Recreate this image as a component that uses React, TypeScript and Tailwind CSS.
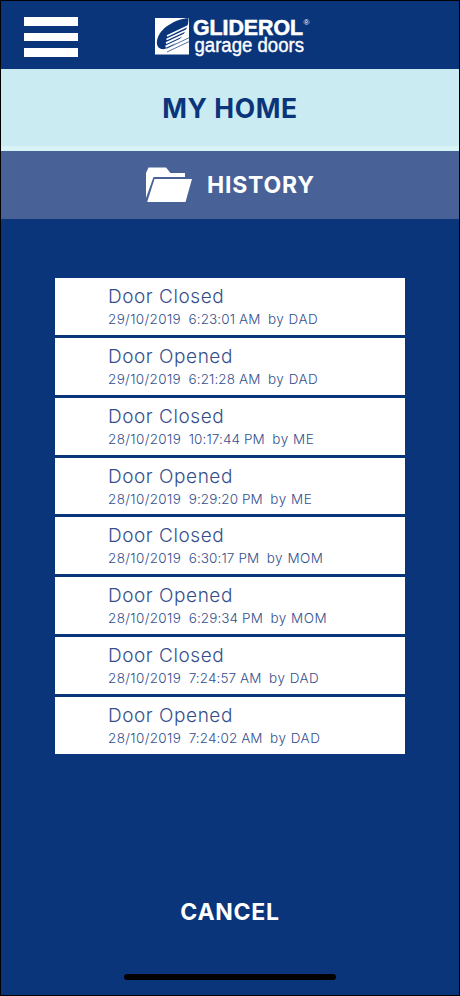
const HISTORY = [
  { event: "Door Closed", date: "29/10/2019", time: "6:23:01 AM", user: "DAD" },
  { event: "Door Opened", date: "29/10/2019", time: "6:21:28 AM", user: "DAD" },
  { event: "Door Closed", date: "28/10/2019", time: "10:17:44 PM", user: "ME" },
  { event: "Door Opened", date: "28/10/2019", time: "9:29:20 PM", user: "ME" },
  { event: "Door Closed", date: "28/10/2019", time: "6:30:17 PM", user: "MOM" },
  { event: "Door Opened", date: "28/10/2019", time: "6:29:34 PM", user: "MOM" },
  { event: "Door Closed", date: "28/10/2019", time: "7:24:57 AM", user: "DAD" },
  { event: "Door Opened", date: "28/10/2019", time: "7:24:02 AM", user: "DAD" },
];

function Logo() {
  return (
    <svg width="160" height="46" viewBox="0 0 160 46" aria-label="Gliderol garage doors">
      <rect x="1" y="2" width="34" height="36.5" fill="#fff" />
      <path d="M34.5 2C22 3 8 11 4 21C1 29 4 34 11 33C22 30 35 16 34.5 2Z" fill="#0a357a" />
      {/* door slats */}
      <g stroke="#fff" fill="none">
        <path d="M13 20L34 10" strokeWidth="1.5" />
        <path d="M12.5 23.6L34.5 13.2" strokeWidth="1.7" />
        <path d="M12 27.2L34.5 16.6" strokeWidth="1.9" />
        <path d="M11.5 30.8L34.5 20" strokeWidth="2.1" />
        <path d="M11.5 34L34.5 23" strokeWidth="2.1" />
      </g>
      <path d="M12.5 32.4L35 21.8M13 36L35 25.6" stroke="#0a357a" strokeWidth="0.7" fill="none" />
      <g fill="#fff" fontFamily="'Liberation Sans', Arial, sans-serif">
        <text x="39" y="19.3" fontSize="22" fontWeight="700" stroke="#fff" strokeWidth="0.6" textLength="110" lengthAdjust="spacingAndGlyphs">
          GLIDEROL
        </text>
        <text x="40.5" y="35.6" fontSize="20" stroke="#fff" strokeWidth="0.4" textLength="109.5" lengthAdjust="spacingAndGlyphs">
          garage doors
        </text>
        <text x="149.5" y="8.5" fontSize="8">®</text>
      </g>
    </svg>
  );
}

function FolderIcon() {
  return (
    <svg width="46" height="36" viewBox="0 0 46 36" fill="#fff" aria-hidden="true">
      <path d="M0 31V6L2.5 0.5H20L24.5 6H39V10H7.5Z" />
      <path d="M8.5 12H46L39.5 35H1.2Z" />
    </svg>
  );
}

export default function App() {
  return (
    <div className="flex h-[996px] w-[460px] flex-col border border-black bg-[#0a357a] font-[Inter,sans-serif]">
      <header className="flex h-[68.4px] shrink-0 items-start">
        <button className="mt-4 ml-[23px] flex w-[54px] flex-col gap-[7px]" aria-label="Menu">
          <span className="h-[8.5px] w-full bg-white" />
          <span className="h-[8.5px] w-full bg-white" />
          <span className="h-[8.5px] w-full bg-white" />
        </button>
        <div className="mt-[15px] ml-[76px]">
          <Logo />
        </div>
      </header>

      <div className="flex h-[81.6px] shrink-0 justify-center border-b-[5px] border-[#d8f3f6] bg-[#caebf2] pt-[18.5px]">
        <h1 className="text-[26.5px] leading-10 font-bold tracking-[0.6px] text-[#0a357a]">MY HOME</h1>
      </div>

      <div className="flex h-[68.5px] shrink-0 items-center bg-[#486197] pl-[145px]">
        <FolderIcon />
        <h2 className="ml-[15px] text-[23px] font-bold tracking-[0.8px] text-white">HISTORY</h2>
      </div>

      <ul className="mx-[54px] mt-[58.5px] flex flex-col gap-[3px]">
        {HISTORY.map(({ event, date, time, user }) => (
          <li key={date + time} className="h-[56.85px] bg-white pt-[7px] pl-[53px] text-[#354f8d]">
            <p className="text-[19px] leading-6 font-light tracking-[0.55px]">{event}</p>
            <p className="flex gap-[7.5px] text-[13.5px] leading-[21px] font-light tracking-[0.1px]">
              <span className="tracking-[0.35px]">{date}</span>
              <span>{time}</span>
              <span className="tracking-[0.5px]">by {user}</span>
            </p>
          </li>
        ))}
      </ul>

      <div className="mt-auto flex flex-col items-center">
        <button className="text-[23px] leading-8 font-bold tracking-[0.7px] text-white">CANCEL</button>
        <span className="mt-[46px] mb-[15.5px] h-[5.5px] w-[212px] rounded-full bg-black" />
      </div>
    </div>
  );
}
